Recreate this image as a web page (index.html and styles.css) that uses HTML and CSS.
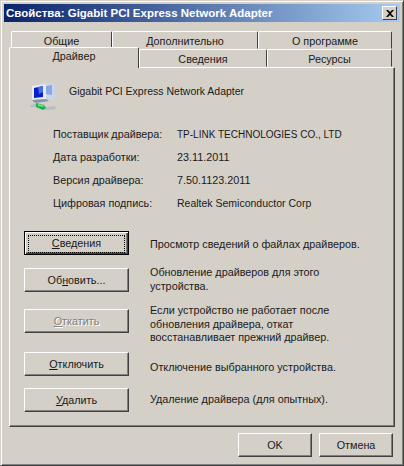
FILE: index.html
```html
<!DOCTYPE html>
<html lang="ru">
<head>
    <meta charset="UTF-8">
    <meta name="viewport" content="width=device-width, initial-scale=1.0">
    <title>Свойства: Gigabit PCI Express Network Adapter</title>
    <link rel="stylesheet" href="styles.css">
</head>
<body>
<div class="window">
    <div class="titlebar">
      <span class="title-text">Свойства: Gigabit PCI Express Network Adapter</span>
      <span class="close-btn">
        <svg width="8" height="7" viewBox="0 0 8 7"><path d="M0 0h2l2 2 2-2h2L5 3.500 8 7H6L4 5 2 7H0l3-3.500z" fill="#000"/></svg>
      </span>
    </div>

    <div class="client">
      <div class="tab-row tab-row-back">
        <div class="tab tab-general">Общие</div>
        <div class="tab tab-advanced">Дополнительно</div>
        <div class="tab tab-about">О программе</div>
      </div>
      <div class="tab-row tab-row-front">
        <div class="tab tab-driver tab-active">Драйвер</div>
        <div class="tab tab-details">Сведения</div>
        <div class="tab tab-resources">Ресурсы</div>
      </div>

      <div class="panel">
        <div class="device">
          <svg class="device-icon" width="28" height="30" viewBox="0 0 28 30">
            <path d="M13 2l10-1 2 1v13l-3 3-9-3z" fill="#c9d3ec"/>
            <path d="M16 4l6-1v10l-6-1z" fill="#8ea6e6"/>
            <path d="M2 4l12-2 2 1v14l-14 1z" fill="#e8ecf6"/>
            <path d="M4 6l9-2v11l-9 1z" fill="#0a1fc4"/>
            <path d="M8 5l5-1v6l-4 2z" fill="#4a6cf0"/>
            <path d="M2 18l14-1 3 2-14 2z" fill="#8b93a8"/>
            <path d="M0 23l6-1 11 3 8-1 1 3-9 1-11-3-6 0z" fill="#b8bcc4"/>
            <path d="M6 21l8 2 2 3-3 2-7-3z" fill="#1fae4e"/>
            <path d="M8 22l5 1 1 2-6-1z" fill="#6fe08e"/>
          </svg>
          <span class="device-name">Gigabit PCI Express Network Adapter</span>
        </div>

        <div class="info">
          <div class="info-row"><span class="info-label">Поставщик драйвера:</span><span class="caps">TP-LINK TECHNOLOGIES CO., LTD</span></div>
          <div class="info-row"><span class="info-label">Дата разработки:</span><span>23.11.2011</span></div>
          <div class="info-row"><span class="info-label">Версия драйвера:</span><span>7.50.1123.2011</span></div>
          <div class="info-row"><span class="info-label">Цифровая подпись:</span><span class="latin">Realtek Semiconductor Corp</span></div>
        </div>

        <div class="actions">
          <div class="action">
            <button class="btn btn-default" type="button"><span class="focus-box"><u>С</u>ведения</span></button>
            <p class="desc desc-one">Просмотр сведений о файлах драйверов.</p>
          </div>
          <div class="action">
            <button class="btn" type="button">Об<u>н</u>овить...</button>
            <p class="desc desc-two">Обновление драйверов для этого<br>устройства.</p>
          </div>
          <div class="action">
            <button class="btn btn-disabled" type="button"><u>О</u>ткатить</button>
            <p class="desc desc-three">Если устройство не работает после<br>обновления драйвера, откат<br>восстанавливает прежний драйвер.</p>
          </div>
          <div class="action">
            <button class="btn" type="button"><u>О</u>тключить</button>
            <p class="desc desc-four">Отключение выбранного устройства.</p>
          </div>
          <div class="action">
            <button class="btn" type="button"><u>У</u>далить</button>
            <p class="desc desc-last">Удаление драйвера (для опытных).</p>
          </div>
        </div>
      </div>

      <div class="footer">
        <button class="btn btn-footer" type="button">OK</button>
        <button class="btn btn-footer" type="button">Отмена</button>
      </div>
    </div>
</div>
</body>
</html>
```

FILE: styles.css
```css
html, body {
  margin: 0;
  padding: 0;
}

body {
  width: 404px;
  height: 466px;
  overflow: hidden;
  font-family: "Liberation Sans", Arial, sans-serif;
  font-size: 10.8px;
  color: #1a1a1a;
}

.window {
  box-sizing: border-box;
  width: 404px;
  height: 466px;
  padding: 3px 3px 2px 3px;
  background: #d4d0c8;
  border: 1px solid;
  border-color: #d4d0c8 #404040 #404040 #d4d0c8;
  box-shadow: inset 1px 1px 0 #fff, inset -1px -1px 0 #808080;
}

.titlebar {
  display: flex;
  align-items: center;
  justify-content: space-between;
  height: 18px;
  padding: 0 3px 0 2px;
  background: linear-gradient(to right, #0a246a, #a6caf0);
  color: #fff;
  font-weight: bold;
  font-size: 11.5px;
}

.close-btn {
  box-sizing: border-box;
  display: flex;
  align-items: center;
  justify-content: center;
  width: 15px;
  height: 14px;
  background: #d4d0c8;
  border: 1px solid;
  border-color: #fff #404040 #404040 #fff;
}

.client {
  padding: 9px 5px 0 5px;
}

.tab-row {
  display: flex;
}

.tab {
  box-sizing: border-box;
  text-align: center;
  background: #d4d0c8;
  border: 1px solid;
  border-color: #fff #404040 #d4d0c8 #fff;
  border-radius: 2px 2px 0 0;
}

.tab-row-back {
  padding-left: 2px;
  height: 18px;
}

.tab-row-back .tab {
  height: 18px;
  line-height: 19px;
}

.tab-general { width: 101px; }
.tab-advanced { width: 146px; }
.tab-about { width: 134px; }

.tab-row-front {
  height: 18px;
}

.tab-row-front .tab {
  height: 18px;
  line-height: 18px;
}

.tab-row-front .tab-active {
  position: relative;
  z-index: 1;
  height: 21px;
  margin-top: -2px;
  line-height: 17px;
  border-bottom: none;
}

.tab-driver { width: 130px; }
.tab-details { width: 128px; }
.tab-resources { width: 125px; }

.panel {
  box-sizing: border-box;
  width: 386px;
  height: 360px;
  background: #d4d0c8;
  border: 1px solid;
  border-color: #fff #404040 #404040 #fff;
  box-shadow: inset -1px -1px 0 #808080;
}

.device {
  display: flex;
  align-items: flex-start;
  gap: 11px;
  height: 26px;
  padding: 14px 0 0 20px;
}

.device-name {
  padding-top: 3px;
  font-size: 10.500px;
}

.caps {
  font-size: 10px;
}

.latin {
  font-size: 10.500px;
}

.info {
  padding: 15px 0 0 43px;
}

.info-row {
  display: flex;
  height: 23px;
  line-height: 23px;
}

.info-label {
  width: 124px;
}

.actions {
  display: grid;
  grid-template-rows: 37px 41px 43px 36px 24px;
  padding: 16px 0 0 14px;
}

.action {
  display: grid;
  grid-template-columns: 105px 1fr;
  column-gap: 21px;
  align-items: start;
}

.desc {
  margin: 0;
  line-height: 13.500px;
}

.desc-one { margin-top: 7px; }
.desc-two { margin-top: -2px; }
.desc-three { margin-top: -5px; }
.desc-four { margin-top: 9px; }
.desc-last { margin-top: 5px; }

.btn {
  box-sizing: border-box;
  width: 105px;
  height: 24px;
  padding: 0;
  font: inherit;
  color: inherit;
  background: #d4d0c8;
  border: 1px solid;
  border-color: #fff #404040 #404040 #fff;
  box-shadow: inset -1px -1px 0 #808080;
}

.btn-default {
  border: 1px solid #000;
  box-shadow: inset 1px 1px 0 #fff, inset -1px -1px 0 #404040, inset -2px -2px 0 #808080;
  padding: 3px;
}

.focus-box {
  display: block;
  height: 16px;
  line-height: 15px;
  border: 1px dotted #000;
}

.btn-disabled {
  color: #808080;
  text-shadow: 1px 1px 0 #fff;
}

.footer {
  display: flex;
  justify-content: flex-end;
  gap: 7px;
  padding: 6px 2px 0 0;
}

.btn-footer {
  width: 74px;
}
```
